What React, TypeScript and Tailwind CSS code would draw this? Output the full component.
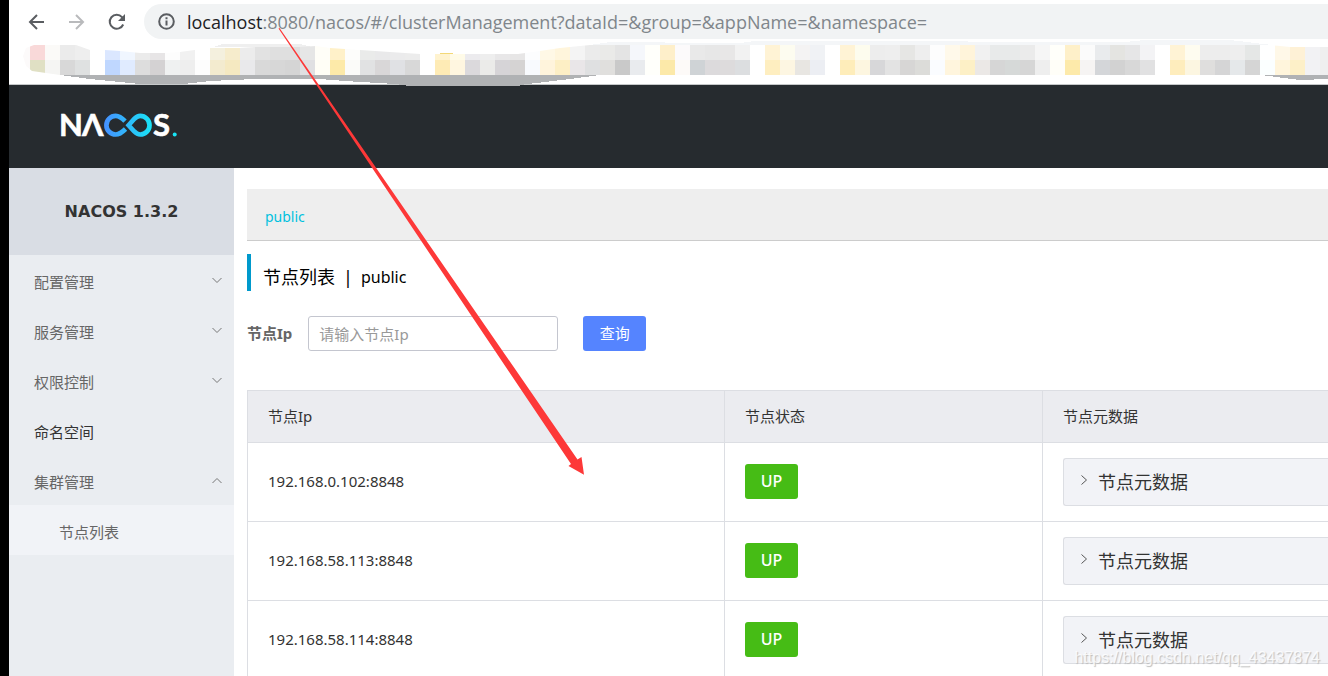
import React from 'react';

const sans = "font-['Noto_Sans','Noto_Sans_CJK_SC',sans-serif]";

const tileStart = 30;
const upperTiles =
  'f9d9d9 fbfaf8 ebebeb eeeeee ffffff dbe7ff f0f6ff ebebeb e7e5e6 fdfdfd f1f1f1 ffffff f4f0de f6eccc ececec e2e2e2 dfdfdf dfdfdf e6e6e6 fffef8 fff1c9 fdfdfb eaebea e9e9ea ebebec ececec ffffff fff3cf fffbe8 ecebee eeeeee e8e7e8 e7e6e6 fcfdfe fff8e6 fff5dc f4f4f4 ebebeb eaeae8 e4e4e4 f5f7fb fffffb feefca fcfafb e9e9e9 e7e7e7 e8e7e7 f2f2f2 ffffff fff3d5 fdfcf0 f4f3f3 f0f2f5 ffffff fff3d5 fdfcee ededed eeeeee e6e6e4 eeeeee fdfdfd fff9ea fff4da f1f1f1 e8eaea e8eaea ebebeb f6f6f6 fffffa fef0c9 fbfbfb e9ebed e4e4e1 e6e6e7 f3f3f5 ffffff fff3d5 fefcf0 ededed ededed eeeeee e5e7e6 ffffff fff8e8 fef1d6 f2f2f4 efefef'.split(' ');
const lowerTiles =
  'e0e0c4 f5f5f3 d8d8d8 dfe1e1 ffffff bfd7ff e0ebff dddddd d4d2d3 eff1f1 eeeeee fdfdfd f3ebcf f5e9c1 e9e9eb d9d9d9 d7d7d7 d5d5d5 e0e0e2 fffef6 fdeaa9 fbfbf9 e1e2e3 d9d7d8 e0e1e4 d8d8d8 ffffff feebb5 fff6e0 dbd9dc ebebe9 d6d4d7 d5d3d3 f8fafe fff4dc fdefc5 e9e6e8 dfe0e1 e0dfdd c9c9c9 e9ebee fffffb fce9a9 fdfaf8 cfd3d6 dcdadc dddbdc dcdee0 ffffff feeec0 fdf6e2 e8e6e2 eceef3 ffffff feedba fdf6e0 d7d7d9 e3e3e3 d7d6d5 dcdcd9 fafcff fff5dd fdf0c6 ebe8e6 d6d6d6 d6d9d8 d6d6d6 eeeeee fffef8 fdeaaa f6f4f3 d4d6d9 d2d2d2 d8d8d8 e1e1e2 ffffff feedbd fcf6e1 dfdedd d5d5d6 e5e8ea d5d5d5 fbffff fff5dc fdf0c8 f2f2f4 efefef'.split(' ');

function BookmarkMosaic() {
  return (
    <svg className="absolute top-0 left-0" width="1328" height="88" viewBox="0 0 1328 88" shapeRendering="crispEdges" aria-hidden="true">
      <defs>
        <clipPath id="brush">
          <path d="M23 56 L26 48 L34 45 H76 L90 50 H105 L120 51 L140 53 H165 L180 52 L195 50 L210 48 L240 48 L255 47 H300 L316 46 L330 48 L360 50 L390 52 L420 54 H518 L540 51 L560 48 L590 45 H1240 L1270 45 L1290 47 H1328 V75 H600 L615 74 H740 L765 73 L840 72 H945 L990 74 H1120 L1155 72 H1230 L1260 75 H60 L32 71 L26 66 Z" />
        </clipPath>
      </defs>
      <path d="M213 47 L222 44 H300 L312 47 Z" fill="#efefef" />
      <path d="M590 45 L610 42 H660 L670 43 H740 L755 41 H945 L990 42 H1125 L1145 40 H1230 L1272 45 Z" fill="#f4f6f8" />
      <g clipPath="url(#brush)">
        <rect x="23" y="45" width="7" height="30" fill="#fcfafa" />
        {upperTiles.map((c, i) => (
          <rect key={i} x={tileStart + i * 15} y="45" width="15" height="15" fill={'#' + c} />
        ))}
        {lowerTiles.map((c, i) => (
          <rect key={i} x={tileStart + i * 15} y="60" width="15" height="15" fill={'#' + c} />
        ))}
      </g>
      <path d="M440 53 h13" stroke="#f3d877" />
      <path d="M60 75 L90 79 L140 84 H183 L210 81 L255 79 H320 L345 81 L395 84 L409 86 H520 V85 L545 82 L570 79 L600 75 Z" fill="#b0b2b4" />
      <path d="M1261 75 L1284 78 L1300 80 L1328 79 V75 Z" fill="#b0b2b4" />
    </svg>
  );
}

function BrowserBar() {
  return (
    <div className="relative h-[85px] shrink-0 border-b border-[#c5c8c9] bg-white pt-1">
      <div className="flex h-[35px] items-center">
        <div className="flex w-[135px] shrink-0 items-center gap-5 pl-[18px]">
          <button aria-label="Back" className="size-5 text-[#5a5d61]">
            <svg viewBox="0 0 20 20" fill="none" stroke="currentColor" strokeWidth="2"><path d="M17 10H3M10 3 3 10l7 7" /></svg>
          </button>
          <button aria-label="Forward" className="size-5 text-[#b9babc]">
            <svg viewBox="0 0 20 20" fill="none" stroke="currentColor" strokeWidth="2"><path d="M2 10h14M9 3l7 7-7 7" /></svg>
          </button>
          <button aria-label="Reload" className="size-5 text-[#5a5d61]">
            <svg viewBox="0 0 20 20" fill="none" stroke="currentColor" strokeWidth="2"><path d="M16.2 12.5A7 7 0 1 1 15 5.1L16.5 7" /><path d="M18 2v7h-7z" fill="currentColor" stroke="none" /></svg>
          </button>
        </div>
        <div className="flex h-[35px] flex-1 items-center gap-3 rounded-l-full bg-[#f1f3f4] pl-[14px] font-['Open_Sans',sans-serif] text-lg">
          <svg className="size-[17px]" viewBox="0 0 17 17" fill="none" stroke="#5a5d61" strokeWidth="2"><circle cx="8.5" cy="8.5" r="7.3" /><path d="M8.5 7.5v5M8.5 4.2v2" /></svg>
          <div className="whitespace-nowrap text-[#80868b]">
            <span className="text-[#202124]">localhost</span>:8080/nacos/#/clusterManagement?dataId=&amp;group=&amp;appName=&amp;namespace=
          </div>
        </div>
      </div>
    </div>
  );
}

function Logo() {
  return (
    <svg width="124" height="48" viewBox="-4 -10 124 48" role="img" aria-label="NACOS.">
      <defs>
        <linearGradient id="loop" gradientUnits="userSpaceOnUse" x1="43" y1="0" x2="91" y2="0">
          <stop offset="0" stopColor="#4690ff" />
          <stop offset="1" stopColor="#18e4f6" />
        </linearGradient>
      </defs>
      <g fill="#fff" stroke="#fff" strokeWidth="0.6" className="font-['Lato',sans-serif] text-[31px] font-bold">
        <text x="-2" y="25">N</text>
        <text x="21" y="25">Λ</text>
        <text x="92" y="25">S</text>
      </g>
      <g fill="none" stroke="url(#loop)" strokeWidth="4.7">
        <path d="M64 10.200 C60.500 6.500 58 4.900 54.700 4.900 a9.300 9.300 0 0 0 0 18.600 C58.500 23.500 61 21.500 64.500 18" />
        <path d="M67.600 14.200 L73 8.200 C75.500 5.600 77 4.900 79.200 4.900 a9.300 9.300 0 0 1 0 18.600 C77 23.500 75.500 22.800 73 20.200 Z" />
      </g>
      <circle cx="113.700" cy="23.500" r="2" fill="#18e4f6" />
    </svg>
  );
}

const menu = [
  { label: '配置管理', arrow: 'down' },
  { label: '服务管理', arrow: 'down' },
  { label: '权限控制', arrow: 'down' },
  { label: '命名空间', arrow: '' },
  { label: '集群管理', arrow: 'up' },
];

function Sidebar() {
  return (
    <nav className="w-[225px] shrink-0 bg-[#eaedf1]">
      <div className="flex h-[87px] items-center justify-center bg-[#d9dde4] font-['DejaVu_Sans',sans-serif] text-base font-bold text-[#333]">NACOS 1.3.2</div>
      {menu.map((m) => (
        <button key={m.label} className={'flex h-[50px] w-full items-center justify-between pr-3 pl-[25px] pt-1 text-[15px] ' + (m.arrow ? 'text-[#666]' : 'text-[#333]')}>
          {m.label}
          {m.arrow && (
            <svg className="mb-1 h-[7px] w-[10px]" viewBox="0 0 10 7" fill="none" stroke="#777">
              <path d={m.arrow === 'down' ? 'M.5 1 5 5.500 9.500 1' : 'M.5 6 5 1.500 9.500 6'} />
            </svg>
          )}
        </button>
      ))}
      <a href="#nodes" className="flex h-[50px] items-center bg-[#f1f3f7] pt-1 pl-[50px] text-[15px] text-[#666]">节点列表</a>
    </nav>
  );
}

const nodes = ['192.168.0.102:8848', '192.168.58.113:8848', '192.168.58.114:8848'];

function NodeTable() {
  return (
    <table className="w-full table-fixed border-collapse text-left text-[15px] text-[#333]">
      <thead>
        <tr className="h-[52px] border-y border-l border-[#dcdee3] bg-[#ebecf0]">
          <th className="w-[477px] border-r border-[#dcdee3] px-5 font-normal">节点Ip</th>
          <th className="w-[318px] border-r border-[#dcdee3] px-5 font-normal">节点状态</th>
          <th className="px-5 font-normal">节点元数据</th>
        </tr>
      </thead>
      <tbody>
        {nodes.map((ip) => (
          <tr key={ip} className="h-[79px] border-y border-l border-[#dcdee3]">
            <td className="border-r border-[#dcdee3] px-5 pb-[2px]">{ip}</td>
            <td className="border-r border-[#dcdee3] px-5 pb-[2px]">
              <span className="flex h-[35px] w-[53px] items-center justify-center rounded-[3px] bg-[#46bc15] text-base font-medium text-white">UP</span>
            </td>
            <td className="pl-5">
              <button className="flex h-12 w-full items-center gap-[10px] rounded-l-[3px] border border-r-0 border-[#dcdee3] bg-[#f2f3f7] pl-4 text-lg">
                <svg className="mb-1 h-[10px] w-2" viewBox="0 0 8 10" fill="none" stroke="#555"><path d="M1.500.5 6.500 5l-5 4.500" /></svg>
                节点元数据
              </button>
            </td>
          </tr>
        ))}
      </tbody>
    </table>
  );
}

export default function App() {
  return (
    <div className={'relative flex h-screen flex-col overflow-hidden border-l-[9px] border-black bg-white ' + sans}>
      <BrowserBar />
      <header className="flex h-[83px] shrink-0 items-center bg-[#262b2f] pb-1 pl-12">
        <Logo />
      </header>
      <div className="flex min-h-0 flex-1">
        <Sidebar />
        <main className="min-w-0 flex-1 overflow-hidden pt-[21px] pl-[13px]">
          <div className="flex h-[52px] items-center border-b border-[#ccc] bg-[#eee] pt-1 pl-[18px]">
            <a href="#public" className="text-sm text-[#00c1de]">public</a>
          </div>
          <h1 className="mt-[13px] flex h-[37px] items-center gap-2 border-l-4 border-[#09c] pt-2 pl-3 text-lg text-black">
            <span>节点列表</span><span>|</span><span className="text-base">public</span>
          </h1>
          <form className="mt-[25px] mb-[39px] flex h-[35px] items-center text-[15px]" onSubmit={(e) => e.preventDefault()}>
            <label htmlFor="ip" className="mr-4 font-bold text-[#666]">节点Ip</label>
            <input id="ip" placeholder="请输入节点Ip" className="h-[35px] w-[250px] rounded-[3px] border border-[#c4c6cf] px-[10px] placeholder:text-[#999]" />
            <button className="ml-[25px] h-[35px] w-[63px] rounded-[3px] bg-[#5584ff] text-white">查询</button>
          </form>
          <NodeTable />
        </main>
      </div>
      <div className="pointer-events-none absolute inset-y-0 -left-[9px]">
        <BookmarkMosaic />
        <svg className="absolute top-0 left-0" width="600" height="480" viewBox="0 0 600 480" fill="#fd3838" aria-hidden="true">
          <path d="M278.500 28.500 L279.500 28 L577.500 459.500 L581.500 457 L584 474.800 L568.500 466 L571 464 Z" />
        </svg>
      </div>
      <div className="pointer-events-none absolute right-2 bottom-[6px] font-['Liberation_Sans',sans-serif] text-base text-white/80 [text-shadow:1px_1px_1px_#bbb]">https://blog.csdn.net/qq_43437874</div>
    </div>
  );
}
